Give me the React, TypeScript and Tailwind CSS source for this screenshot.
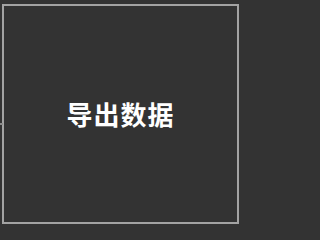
export default function App() {
  return (
    <div className="relative min-h-screen w-full overflow-hidden bg-[#333333]">
      {/* edge of the neighbouring cell */}
      <div className="absolute left-0 top-[123px] h-[2px] w-[3px] bg-[#8a8a8a]" />

      <div className="ml-[2px] pt-[4px]">
        <div className="flex h-[220px] w-[237px] items-center justify-center border-2 border-[#a3a3a3] bg-[#333333]">
          <span
            className="text-[26px] font-bold leading-none tracking-[1px] text-white"
            style={{ fontFamily: '"Noto Sans CJK SC", "Noto Sans", sans-serif' }}
          >
            导出数据
          </span>
        </div>
      </div>
    </div>
  );
}
